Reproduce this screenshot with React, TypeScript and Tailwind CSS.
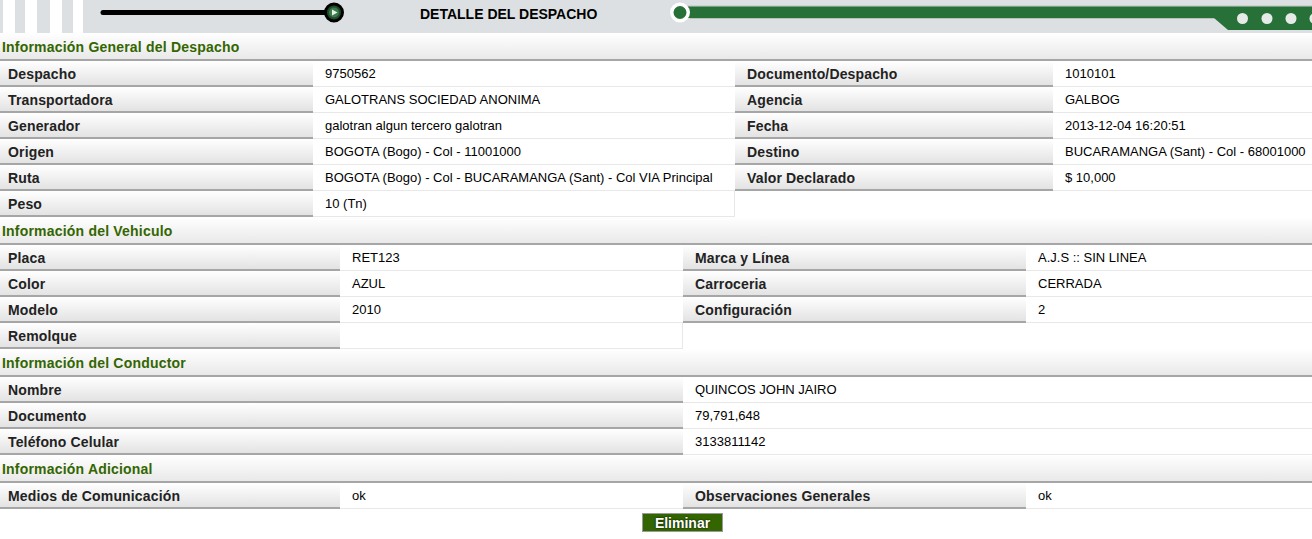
// Detalle del despacho: header strip + four info sections laid out as grids.

type Cell = { label: string; value: string };

const FONT = { fontFamily: '"Liberation Sans", Arial, sans-serif' };

const GENERAL: [Cell, Cell | null][] = [
  [{ label: "Despacho", value: "9750562" }, { label: "Documento/Despacho", value: "1010101" }],
  [{ label: "Transportadora", value: "GALOTRANS SOCIEDAD ANONIMA" }, { label: "Agencia", value: "GALBOG" }],
  [{ label: "Generador", value: "galotran algun tercero galotran" }, { label: "Fecha", value: "2013-12-04 16:20:51" }],
  [{ label: "Origen", value: "BOGOTA (Bogo) - Col - 11001000" }, { label: "Destino", value: "BUCARAMANGA (Sant) - Col - 68001000" }],
  [{ label: "Ruta", value: "BOGOTA (Bogo) - Col - BUCARAMANGA (Sant) - Col VIA Principal" }, { label: "Valor Declarado", value: "$ 10,000" }],
  [{ label: "Peso", value: "10 (Tn)" }, null],
];

const VEHICULO: [Cell, Cell | null][] = [
  [{ label: "Placa", value: "RET123" }, { label: "Marca y Línea", value: "A.J.S :: SIN LINEA" }],
  [{ label: "Color", value: "AZUL" }, { label: "Carroceria", value: "CERRADA" }],
  [{ label: "Modelo", value: "2010" }, { label: "Configuración", value: "2" }],
  [{ label: "Remolque", value: "" }, null],
];

const CONDUCTOR: Cell[] = [
  { label: "Nombre", value: "QUINCOS JOHN JAIRO" },
  { label: "Documento", value: "79,791,648" },
  { label: "Teléfono Celular", value: "3133811142" },
];

const ADICIONAL: [Cell, Cell | null][] = [
  [{ label: "Medios de Comunicación", value: "ok" }, { label: "Observaciones Generales", value: "ok" }],
];

function Label({ text, right }: { text: string; right?: boolean }) {
  return (
    <div
      className={
        "h-[26px] flex items-center pt-[2px] bg-gradient-to-b from-white to-[#e3e3e3] border-b-2 border-[#a6a6a6] text-[14px] tracking-[0.15px] font-bold text-[#222] whitespace-nowrap overflow-hidden" +
        (right ? " pl-3" : " pl-2")
      }
    >
      {text}
    </div>
  );
}

function Value({ text, last }: { text: string; last?: boolean }) {
  return (
    <div
      className={
        "h-[26px] flex items-center pl-3 pt-[1px] bg-white border-b border-[#e8e8e8] text-[13px] text-black whitespace-nowrap overflow-hidden" +
        (last ? " border-r" : "")
      }
    >
      {text}
    </div>
  );
}

function SectionTitle({ text }: { text: string }) {
  return (
    <div className="h-[28px] flex items-center pl-[2px] pt-[2px] bg-gradient-to-b from-white to-[#e9e9e9] border-b-2 border-[#a6a6a6] text-[14px] tracking-[0.2px] font-bold text-[#336600]">
      {text}
    </div>
  );
}

function FourCol({ rows, cols }: { rows: [Cell, Cell | null][]; cols: string }) {
  return (
    <div className={"grid " + cols}>
      {rows.map(([a, b], i) => (
        <div key={i} className="contents">
          <Label text={a.label} />
          <Value text={a.value} last={!b} />
          {b ? (
            <>
              <Label text={b.label} right />
              <Value text={b.value} />
            </>
          ) : (
            <>
              <div className="h-[26px]" />
              <div className="h-[26px]" />
            </>
          )}
        </div>
      ))}
    </div>
  );
}

function HeaderStrip() {
  return (
    <div className="relative h-[33px] bg-[#dde0e3]">
      <svg width="1312" height="33" className="absolute left-0 top-0" aria-hidden>
        <rect x="3" y="0" width="12" height="33" fill="#fff" />
        <rect x="25" y="0" width="12" height="33" fill="#fff" />
        <rect x="50" y="0" width="12" height="33" fill="#fff" />
        <rect x="73" y="0" width="10" height="33" fill="#fff" />
        <line x1="103" y1="12.5" x2="328" y2="12.5" stroke="#000" strokeWidth="5" strokeLinecap="round" />
        <circle cx="334" cy="12.5" r="8.5" fill="#1f4a2b" stroke="#000" strokeWidth="3" />
        <circle cx="334" cy="12.5" r="5" fill="#3d7b4a" />
        <polygon points="332,9.5 332,15.5 337.5,12.5" fill="#e9f2ea" />
        <rect x="680" y="5.5" width="632" height="1" fill="#b7c2ba" />
        <rect x="680" y="6.5" width="632" height="11.5" fill="#277139" />
        <rect x="690" y="18" width="525" height="1" fill="#b7c2ba" />
        <polygon points="1214,18 1228,30 1312,30 1312,18" fill="#277139" />
        <circle cx="1242.5" cy="18.5" r="5.5" fill="#e6ebe7" />
        <circle cx="1267" cy="18.5" r="5.5" fill="#e6ebe7" />
        <circle cx="1291" cy="18.5" r="5.5" fill="#e6ebe7" />
        <circle cx="1315" cy="18.5" r="5.5" fill="#e6ebe7" />
        <circle cx="680" cy="12.5" r="10" fill="#fff" />
        <circle cx="680" cy="12.5" r="6.5" fill="#277139" />
      </svg>
      <div className="absolute left-[420px] top-[6px] text-[14px] font-bold text-black leading-[17px]">
        DETALLE DEL DESPACHO
      </div>
    </div>
  );
}

export default function App() {
  return (
    <div className="w-[1312px] h-[539px] bg-white overflow-hidden" style={FONT}>
      <HeaderStrip />

      <SectionTitle text="Información General del Despacho" />
      <FourCol rows={GENERAL} cols="grid-cols-[313px_422px_318px_1fr]" />

      <SectionTitle text="Información del Vehiculo" />
      <FourCol rows={VEHICULO} cols="grid-cols-[340px_343px_343px_1fr]" />

      <SectionTitle text="Información del Conductor" />
      <div className="grid grid-cols-[683px_1fr]">
        {CONDUCTOR.map((c, i) => (
          <div key={i} className="contents">
            <Label text={c.label} />
            <Value text={c.value} />
          </div>
        ))}
      </div>

      <SectionTitle text="Información Adicional" />
      <FourCol rows={ADICIONAL} cols="grid-cols-[340px_343px_343px_1fr]" />

      <div className="flex pl-[642px] pt-1">
        <button className="w-[81px] h-[19px] bg-[#336600] border border-[#9a9a9a] text-white text-[14px] font-bold leading-none [text-shadow:0_0_2px_#000]">
          Eliminar
        </button>
      </div>
    </div>
  );
}
